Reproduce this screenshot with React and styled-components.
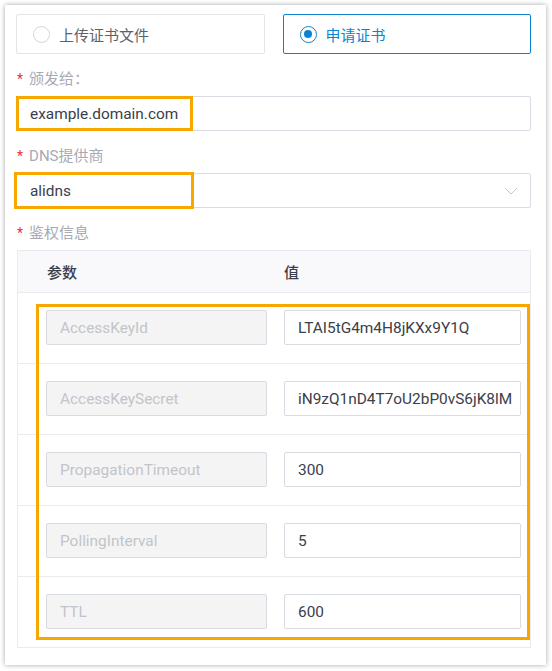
import React from 'react';
import styled, { createGlobalStyle } from 'styled-components';

const GlobalStyle = createGlobalStyle`
  html, body {
    margin: 0;
    padding: 0;
    background: #ffffff;
  }
  body {
    font-family: Roboto, "Noto Sans CJK SC", sans-serif;
    -webkit-font-smoothing: antialiased;
  }
`;

const colors = {
  blue: '#0b84d0',
  border: '#d9dbe3',
  line: '#e9ebf0',
  label: '#a7aab3',
  text: '#3b404a',
  muted: '#c2c4ca',
  red: '#f0303a',
  orange: '#f7a800',
};

const params = [
  { key: 'AccessKeyId', value: 'LTAI5tG4m4H8jKXx9Y1Q' },
  { key: 'AccessKeySecret', value: 'iN9zQ1nD4T7oU2bP0vS6jK8lM' },
  { key: 'PropagationTimeout', value: '300' },
  { key: 'PollingInterval', value: '5' },
  { key: 'TTL', value: '600' },
];

function App() {
  return (
    <>
      <GlobalStyle />
      <Card>
        <RadioGroup>
          <RadioBox>
            <Circle />
            上传证书文件
          </RadioBox>
          <RadioBox checked>
            <Circle checked />
            申请证书
          </RadioBox>
        </RadioGroup>

        <Label>颁发给：</Label>
        <Field>
          <Input>example.domain.com</Input>
          <Highlight left="0" top="0" width="177px" height="35px" />
        </Field>

        <Label>DNS提供商</Label>
        <Field>
          <Input>
            alidns
            <Chevron width="14" height="8" viewBox="0 0 14 8">
              <polyline points="1,1 7,7 13,1" />
            </Chevron>
          </Input>
          <Highlight left="-2px" top="-1px" width="180px" height="37px" />
        </Field>

        <Label>鉴权信息</Label>
        <Table>
          <HeadRow>
            <HeadCell first>参数</HeadCell>
            <HeadCell>值</HeadCell>
          </HeadRow>
          <Body>
            {params.map((p) => (
              <Row key={p.key}>
                <Cell first>
                  <Input disabled>{p.key}</Input>
                </Cell>
                <Cell>
                  <Input>{p.value}</Input>
                </Cell>
              </Row>
            ))}
            <Highlight left="18px" top="11px" width="494px" height="336px" />
          </Body>
        </Table>
      </Card>
    </>
  );
}

const Card = styled.div`
  box-sizing: border-box;
  margin: 5px;
  width: 541px;
  height: 660px;
  padding: 9px 15px 0 11px;
  background: #fff;
  box-shadow: 0 0 5px rgba(0, 0, 0, 0.35);
`;

const RadioGroup = styled.div`
  display: flex;
  gap: 18px;
`;

const RadioBox = styled.div`
  box-sizing: border-box;
  flex: 1;
  height: 40px;
  display: flex;
  align-items: center;
  gap: 9px;
  padding-left: 16px;
  font-size: 15px;
  color: ${(p) => (p.checked ? colors.blue : '#5d616b')};
  border: 1px solid ${(p) => (p.checked ? colors.blue : '#e2e4ea')};
  border-radius: 2px;
`;

const Circle = styled.span`
  box-sizing: border-box;
  width: 17px;
  height: 17px;
  border-radius: 50%;
  border: ${(p) => (p.checked ? `1.5px solid ${colors.blue}` : '1px solid #d3d5de')};
  display: flex;
  align-items: center;
  justify-content: center;
  &::after {
    content: '';
    display: ${(p) => (p.checked ? 'block' : 'none')};
    width: 8px;
    height: 8px;
    border-radius: 50%;
    background: ${colors.blue};
  }
`;

const Label = styled.div`
  height: 20px;
  margin: 13px 0 9px 1px;
  display: flex;
  align-items: center;
  font-size: 15px;
  color: ${colors.label};
  &::before {
    content: '*';
    color: ${colors.red};
    font-size: 14px;
    margin-right: 6px;
    margin-top: 3px;
  }
`;

const Field = styled.div`
  position: relative;
`;

const Input = styled.div`
  box-sizing: border-box;
  position: relative;
  height: 35px;
  display: flex;
  align-items: center;
  padding-left: 13px;
  font-size: 15.4px;
  color: ${(p) => (p.disabled ? colors.muted : colors.text)};
  background: ${(p) => (p.disabled ? '#f4f4f5' : '#fff')};
  border: 1px solid ${colors.border};
  border-radius: 2px;
  white-space: nowrap;
  overflow: hidden;
`;

const Chevron = styled.svg`
  position: absolute;
  right: 12px;
  top: 13px;
  fill: none;
  stroke: #c4c7cf;
  stroke-width: 1;
`;

const Highlight = styled.div`
  box-sizing: border-box;
  position: absolute;
  left: ${(p) => p.left};
  top: ${(p) => p.top};
  width: ${(p) => p.width};
  height: ${(p) => p.height};
  border: 3px solid ${colors.orange};
  pointer-events: none;
`;

const Table = styled.div`
  margin-left: 1px;
  border: 1px solid ${colors.line};
  border-bottom: none;
`;

const HeadRow = styled.div`
  display: grid;
  grid-template-columns: 258px 1fr;
  height: 41px;
  background: #f9f9fb;
  border-bottom: 1px solid ${colors.line};
`;

const HeadCell = styled.div`
  display: flex;
  align-items: center;
  padding-left: ${(p) => (p.first ? '29px' : '8px')};
  font-size: 15px;
  font-weight: 500;
  color: ${colors.text};
`;

const Body = styled.div`
  position: relative;
`;

const Row = styled.div`
  display: grid;
  grid-template-columns: 258px 1fr;
  border-bottom: 1px solid ${colors.line};
`;

const Cell = styled.div`
  padding: 17px 9px 18px ${(p) => (p.first ? '28px' : '8px')};
`;

export default App;
